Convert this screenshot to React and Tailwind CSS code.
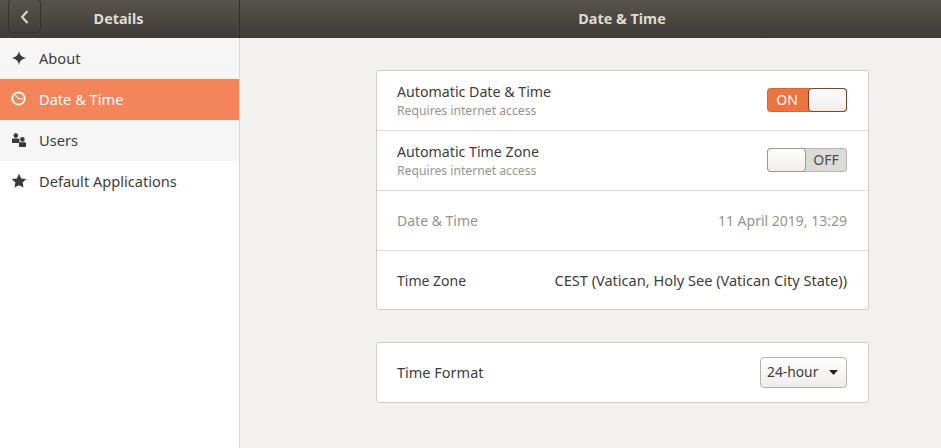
function Row({ active, tint, icon, label }) {
  return (
    <div className={`h-[41px] flex items-center pl-[11px] ${active ? "bg-[#f4845a] text-white" : tint ? "bg-[#f6f6f6] text-[#3d3d3d]" : "bg-white text-[#3d3d3d]"}`}>
      <span className={`w-[16px] h-[16px] flex items-center justify-center mb-[1px] ${active ? "text-white" : "text-[#3a3a3a]"}`}>{icon}</span>
      <span className="ml-[12px] text-[14.6px] leading-none">{label}</span>
    </div>
  );
}
const Spark = () => (
  <svg width="16" height="16" viewBox="0 0 16 16"><path fill="currentColor" d="M8 .8C8.6 5 10.4 6.9 15.2 8 10.4 9.1 8.6 11 8 15.2 7.4 11 5.6 9.1.8 8 5.6 6.9 7.4 5 8 .8Z" /></svg>
);
const Clock = () => (
  <svg width="16" height="16" viewBox="0 0 16 16" fill="none" stroke="currentColor"><circle cx="7.5" cy="7.5" r="6.2" strokeWidth="1.8" /><path d="M4.2 4.4 7.8 7.6H11.6" strokeWidth="1.1" /></svg>
);
const UsersIcon = () => (
  <svg width="16" height="16" viewBox="0 0 16 16" fill="currentColor"><circle cx="4.8" cy="3.6" r="2.3" /><path d="M1 7.4c0-.6.5-1 1-1h5.4c.6 0 1 .4 1 1V11H1Z" /><circle cx="11.4" cy="7.4" r="2.3" /><path d="M8 11.2c0-.6.4-1 1-1h5c.6 0 1 .4 1 1V15H8Z" /></svg>
);
const Star = () => (
  <svg width="16" height="16" viewBox="0 0 16 16"><path fill="currentColor" d="M8 .8l2.2 4.6 5 .7-3.6 3.5.9 5L8 12.2l-4.5 2.4.9-5L.8 6.1l5-.7Z" /></svg>
);
function Switch({ on }) {
  const knob = <span className={`w-[39px] h-[24px] rounded-[4px] bg-gradient-to-b from-white to-[#efedeb] border ${on ? "border-[#8a3f20]" : "border-[#9b9b96]"}`} />;
  return on ? (
    <div className="w-[80px] h-[24px] mb-[1px] rounded-[4px] flex items-center bg-[#ec7440] border-y border-l border-[#d0683a]">
      <span className="w-[39px] text-center text-[14px] leading-none text-white mb-[1px]">ON</span>
      <span className="ml-[2px] flex">{knob}</span>
    </div>
  ) : (
    <div className="w-[80px] h-[24px] mb-[1px] rounded-[4px] flex items-center bg-[#dcdbd8] border-y border-r border-[#b5b3ae]">
      {knob}
      <span className="w-[40px] text-center text-[14px] leading-none text-[#4a4a4a] mb-[1px]">OFF</span>
    </div>
  );
}
function CardRow({ title, sub, right, muted, border = true, lift = false, size = "text-[14px]" }) {
  return (
    <div className={`h-[60px] flex items-center justify-between pl-[20px] pr-[21px] ${border ? "border-b border-[#dcdbd8]" : ""} ${lift ? "pb-[2px]" : ""}`}>
      <div className={`flex flex-col ${sub ? "mt-[2px]" : ""}`}>
        <span className={`${size} leading-[18px] ${muted ? "text-[#95948f]" : "text-[#3d3d3d]"}`}>{title}</span>
        {sub && <span className="mt-[1px] text-[12.2px] leading-[18px] text-[#95948f]">{sub}</span>}
      </div>
      {right}
    </div>
  );
}
export default function App() {
  return (
    <div className="w-[941px] h-[448px] flex flex-col overflow-hidden bg-[#f2f1ef] font-['Noto_Sans',sans-serif]">
      <header className="h-[38px] flex bg-gradient-to-b from-[#58544b] to-[#3d3b36] shrink-0">
        <div className="w-[240px] flex items-center relative border-r border-[#302f2b]">
          <div className="ml-[8px] mb-[5px] w-[33px] h-[34px] rounded-[4px] border border-[#33322d] flex items-center justify-center -mt-[1px]">
            <svg width="12" height="14" viewBox="0 0 12 14" fill="none" stroke="#dcdad5" strokeWidth="2" className="mt-[1px]"><path d="M8.5 1 3 7l5.5 6" /></svg>
          </div>
          <span className="absolute left-0 w-[237px] text-center text-[14.4px] font-bold text-[#dfdbd2] leading-none">Details</span>
        </div>
        <div className="flex-1 flex items-center justify-center pl-[63px]">
          <span className="text-[14.4px] font-bold text-[#dfdbd2] leading-none">Date &amp; Time</span>
        </div>
      </header>
      <div className="flex-1 flex min-h-0">
        <aside className="w-[240px] bg-white border-r border-[#d9d8d5] shrink-0">
          <Row tint icon={<Spark />} label="About" />
          <Row active icon={<Clock />} label="Date & Time" />
          <Row tint icon={<UsersIcon />} label="Users" />
          <Row icon={<Star />} label="Default Applications" />
        </aside>
        <main className="flex-1 pl-[136px] pt-[32px]">
          <section className="w-[493px] h-[240px] bg-white border border-[#cfcdc9] rounded-[3px]">
            <CardRow size="text-[14.2px]" title="Automatic Date & Time" sub="Requires internet access" right={<Switch on />} />
            <CardRow size="text-[14.2px]" title="Automatic Time Zone" sub="Requires internet access" right={<Switch />} />
            <CardRow muted title="Date & Time" right={<span className="text-[14px] text-[#95948f]">11 April 2019, 13:29</span>} />
            <CardRow border={false} title="Time Zone" right={<span className="text-[14.55px] text-[#3d3d3d]">CEST (Vatican, Holy See (Vatican City State))</span>} />
          </section>
          <section className="mt-[32px] w-[493px] h-[61px] bg-white border border-[#cfcdc9] rounded-[3px]">
            <CardRow border={false} lift size="text-[14.5px]" title="Time Format" right={
              <div className="w-[87px] h-[31px] rounded-[4px] border border-[#b5b3ae] bg-gradient-to-b from-white to-[#efedeb] flex items-center justify-between pl-[6px] pr-[8px]">
                <span className="text-[13.8px] text-[#3d3d3d] leading-none">24-hour</span>
                <svg width="9" height="5" viewBox="0 0 9 5"><path fill="#222" d="M0 0h9L4.5 5Z" /></svg>
              </div>
            } />
          </section>
        </main>
      </div>
    </div>
  );
}
